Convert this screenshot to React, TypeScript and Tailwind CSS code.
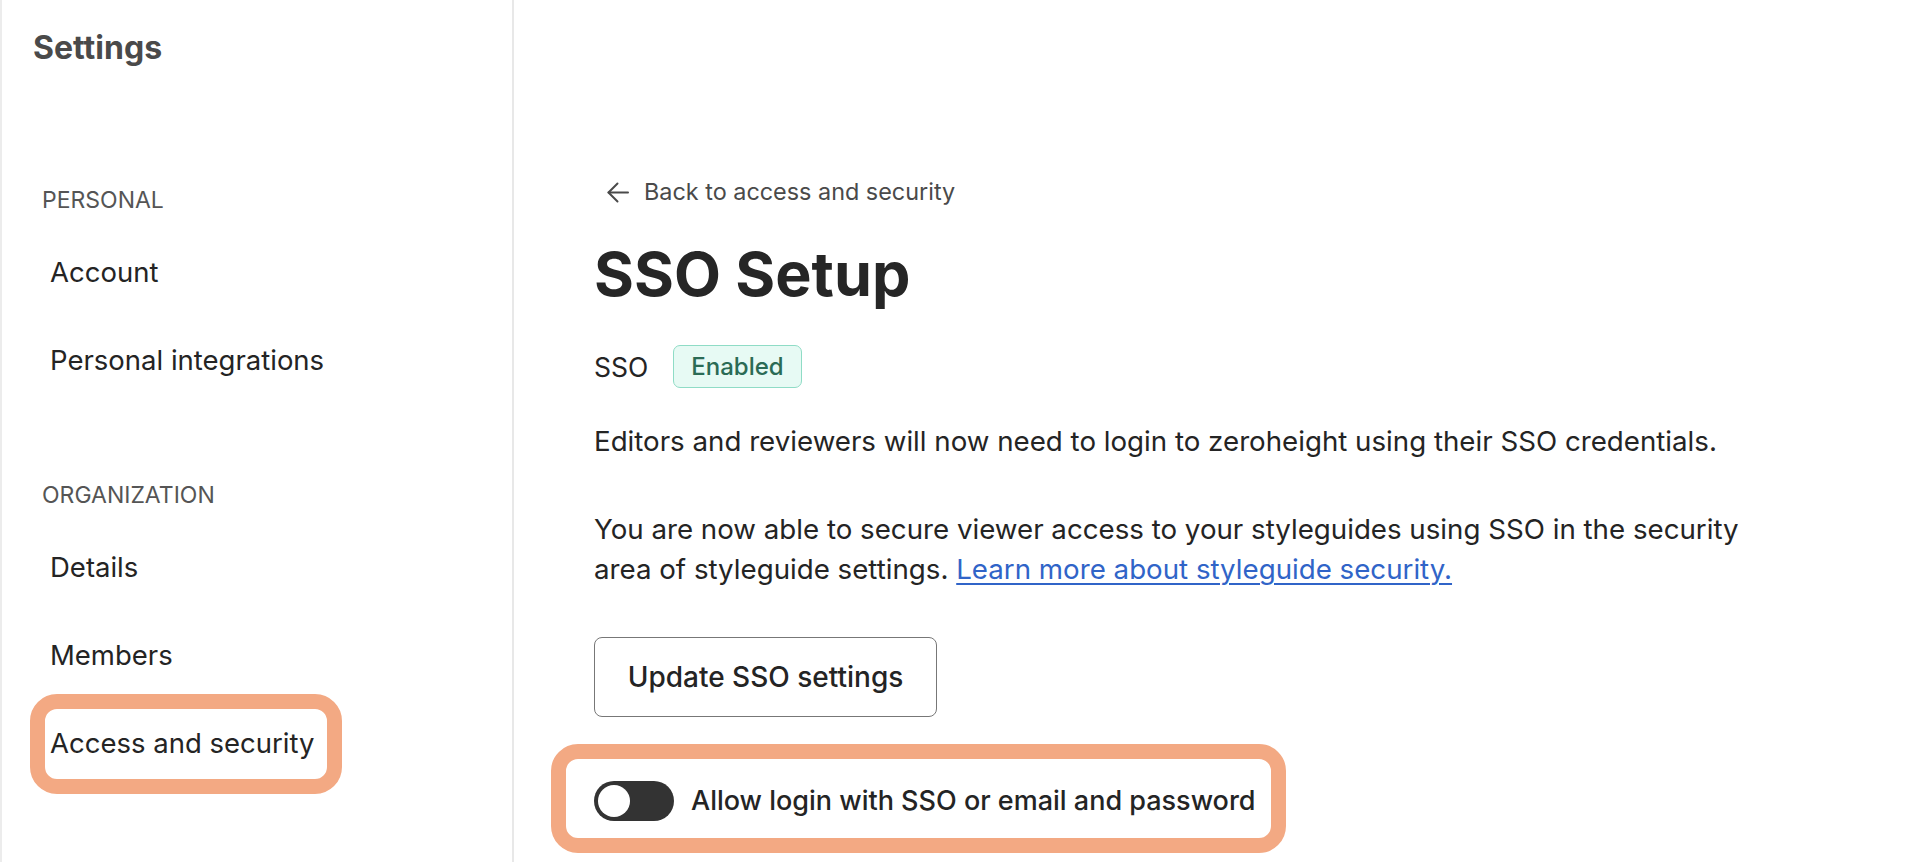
import React from "react";

function Highlight({ className }: { className: string }) {
  return (
    <span
      aria-hidden
      className={`pointer-events-none absolute border-[15px] border-[#f3a983] rounded-[27px] ${className}`}
    />
  );
}

export default function App() {
  return (
    <div className="flex h-[862px] w-[1920px] overflow-hidden bg-white text-[#242424] font-[family-name:Inter,sans-serif]">
      <aside className="w-[514px] shrink-0 border-l-2 border-r-2 border-l-[#ececec] border-r-[#e8e8e8] pt-[28px]">
        <h1 className="pl-[31px] text-[32px] leading-[40px] font-bold text-[#4a4a4a]">Settings</h1>

        <div className="mt-[118px] pl-[40px] text-[23px] leading-[28px] text-[#555]">PERSONAL</div>
        <ul className="mt-[14px]">
          <li className="pl-[48px] py-[28px] text-[27.5px] leading-[32px]">Account</li>
          <li className="pl-[48px] py-[28px] text-[27.5px] leading-[32px]">Personal integrations</li>
        </ul>

        <div className="mt-[77px] pl-[40px] text-[23px] leading-[28px] text-[#555]">ORGANIZATION</div>
        <ul className="mt-[14px]">
          <li className="pl-[48px] py-[28px] text-[27.5px] leading-[32px]">Details</li>
          <li className="pl-[48px] py-[28px] text-[27.5px] leading-[32px]">Members</li>
          <li className="pl-[48px] py-[28px] text-[27.5px] leading-[32px]">
            <span className="relative inline-block">
              Access and security
              <Highlight className="-left-[20px] -right-[28px] -top-[33px] -bottom-[35px]" />
            </span>
          </li>
        </ul>
      </aside>

      <main className="flex-1 pl-[80px] pt-[178px]">
        <a className="flex items-center gap-[15px] pl-[13px] text-[23.4px] leading-[28px] text-[#4a4a4a]">
          <svg width="22" height="21" viewBox="0 0 22 21" fill="none" stroke="#4a4a4a" strokeWidth="2" strokeLinecap="round" strokeLinejoin="round">
            <path d="M21 10.5H1.5" />
            <path d="M10.5 1.5L1.5 10.5L10.5 19.5" />
          </svg>
          Back to access and security
        </a>

        <h2 className="mt-[32px] text-[61px] leading-[72px] font-bold text-[#262626]">SSO Setup</h2>

        <div className="mt-[35px] flex h-[43px] items-center gap-[25px]">
          <span className="text-[26.5px] leading-[32px]">SSO</span>
          <span className="flex h-[43px] items-center rounded-[7px] border-[1.5px] border-[#8fdcc6] bg-[#e7faf4] px-[17px] text-[24px] font-medium text-[#2b6b55]">
            Enabled
          </span>
        </div>

        <p className="mt-[33px] text-[27.7px] leading-[40px]">
          Editors and reviewers will now need to login to zeroheight using their SSO credentials.
        </p>

        <p className="mt-[48px] text-[27.7px] leading-[40px]">
          You are now able to secure viewer access to your styleguides using SSO in the security
          <br />
          area of styleguide settings.{" "}
          <a className="text-[#3064c8] underline underline-offset-[4px] decoration-[1.5px]">
            Learn more about styleguide security.
          </a>
        </p>

        <button className="mt-[48px] flex h-[80px] w-[343px] items-center justify-center rounded-[8px] border-[1.5px] border-[#777] text-[28px] font-medium text-[#242424]">
          Update SSO settings
        </button>

        <div className="relative mt-[64px] inline-flex h-[40px] items-center gap-[17px]">
          <span className="flex h-[40px] w-[80px] items-center rounded-full bg-[#333] px-[4px]">
            <span className="h-[32px] w-[32px] rounded-full bg-white" />
          </span>
          <span className="text-[27px] leading-[32px] font-medium">Allow login with SSO or email and password</span>
          <Highlight className="-left-[43px] -right-[30px] -top-[37px] -bottom-[32px]" />
        </div>
      </main>
    </div>
  );
}
